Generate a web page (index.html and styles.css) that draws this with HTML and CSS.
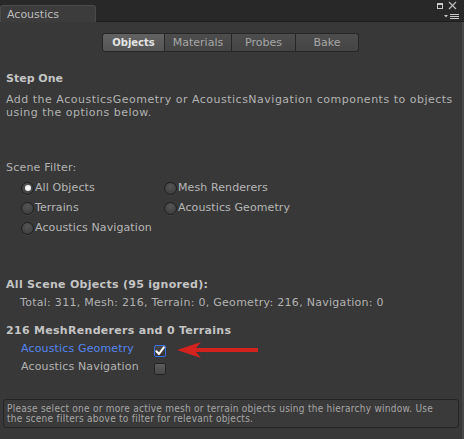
FILE: index.html
```html
<!DOCTYPE html>
<html>
<head>
<meta charset="utf-8">
<link rel="stylesheet" href="styles.css">
</head>
<body>
<div class="window">
  <div class="titlebar">
    <div class="tab">Acoustics</div>
    <svg class="winicons" width="24" height="20" viewBox="0 0 24 20">
      <rect x="1.5" y="2.5" width="5" height="5" fill="none" stroke="#c8c8c8" stroke-width="1"/>
      <rect x="1" y="2" width="6" height="2" fill="#c8c8c8"/>
      <path d="M13 1 L20 8 M20 1 L13 8" stroke="#bdbdbd" stroke-width="1.2" fill="none"/>
      <path d="M8 14 L12 14 L10 16.5 Z" fill="#c8c8c8"/>
      <path d="M14 13.5 H23 M14 15.5 H23 M14 17.5 H23" stroke="#c8c8c8" stroke-width="1.2"/>
    </svg>
  </div>
  <div class="content">
    <div class="toolbar">
      <div class="tb tb-objects sel">Objects</div>
      <div class="tb tb-materials">Materials</div>
      <div class="tb tb-probes">Probes</div>
      <div class="tb tb-bake">Bake</div>
    </div>

    <div class="heading step">Step One</div>
    <p class="para">Add the AcousticsGeometry or AcousticsNavigation components to objects<br>using the options below.</p>

    <div class="label filter">Scene Filter:</div>
    <div class="radios">
      <div class="radio"><span class="dot on"></span>All Objects</div>
      <div class="radio"><span class="dot"></span>Mesh Renderers</div>
      <div class="radio"><span class="dot"></span>Terrains</div>
      <div class="radio"><span class="dot"></span>Acoustics Geometry</div>
      <div class="radio"><span class="dot"></span>Acoustics Navigation</div>
    </div>

    <div class="heading all">All Scene Objects (95 ignored):</div>
    <div class="label totals">Total: 311, Mesh: 216, Terrain: 0, Geometry: 216, Navigation: 0</div>

    <div class="heading mesh">216 MeshRenderers and 0 Terrains</div>
    <div class="checks">
      <div class="check-row">
        <span class="check-label focus">Acoustics Geometry</span>
        <span class="box checked">
          <svg width="10" height="10" viewBox="0 0 10 10"><path d="M1.4 5.2 L4 8 L8.8 1.4" stroke="#ffffff" stroke-width="2" fill="none" stroke-linecap="round" stroke-linejoin="round"/></svg>
        </span>
        <svg class="arrow" width="84" height="20" viewBox="0 0 84 20">
          <path d="M0 10 L24 2 L19 8 L81 8 L81 12 L19 12 L24 18 Z" fill="#d4221f"/>
        </svg>
      </div>
      <div class="check-row">
        <span class="check-label">Acoustics Navigation</span>
        <span class="box"></span>
      </div>
    </div>

    <div class="helpbox">Please select one or more active mesh or terrain objects using the hierarchy window. Use<br>the scene filters above to filter for relevant objects.</div>
  </div>
</div>
</body>
</html>
```

FILE: styles.css
```css
html, body {
  margin: 0;
  padding: 0;
  background: #383838;
}
body {
  width: 464px;
  height: 439px;
  overflow: hidden;
  font-family: "DejaVu Sans", Verdana, sans-serif;
  font-size: 11px;
  color: #b4b4b4;
}
.window {
  width: 464px;
  height: 439px;
  display: flex;
  flex-direction: column;
}
.titlebar {
  height: 21px;
  background: #282828;
  border-bottom: 1px solid #1d1d1d;
  display: flex;
  align-items: flex-start;
}
.tab {
  margin-top: 5px;
  width: 96px;
  height: 17px;
  box-sizing: border-box;
  background: #3c3c3c;
  border: 1px solid #4a4a4a;
  border-bottom: none;
  border-radius: 3px 3px 0 0;
  padding-left: 6px;
  line-height: 17px;
  color: #bcbcbc;
  position: relative;
  z-index: 1;
}
.winicons {
  margin-left: auto;
  margin-right: 4px;
  margin-top: 1px;
}
.content {
  flex: 1;
  box-sizing: border-box;
  padding: 11px 0 0 6px;
  border-right: 2px solid #474747;
  position: relative;
}
.toolbar {
  display: flex;
  margin-left: 96px;
  height: 19px;
}
.tb {
  box-sizing: border-box;
  height: 19px;
  line-height: 18px;
  text-align: center;
  background: linear-gradient(#4d4d4d, #444444);
  border: 1px solid #262626;
  border-left: none;
  color: #a6a6a6;
}
.tb-objects { width: 63px; border-left: 1px solid #262626; border-radius: 3px 0 0 3px; }
.tb-materials { width: 67px; }
.tb-probes { width: 64px; }
.tb-bake { width: 63px; border-radius: 0 3px 3px 0; }
.tb.sel {
  background: linear-gradient(#626262, #555555);
  color: #e4e4e4;
  font-weight: bold;
  font-size: 10px;
}
.heading {
  font-weight: bold;
  color: #c4c4c4;
  line-height: 14px;
  letter-spacing: 0.3px;
}
.step { margin-top: 20px; letter-spacing: 0; }
.para {
  margin: 7px 0 0 0;
  line-height: 13px;
  color: #b2b2b2;
  letter-spacing: 0.5px;
}
.label {
  line-height: 14px;
  color: #b2b2b2;
}
.filter { margin-top: 42px; letter-spacing: 0.2px; }
.radios {
  margin-top: 3px;
  padding-left: 15px;
  display: grid;
  grid-template-columns: 143px auto;
}
.radio {
  height: 20px;
  line-height: 20px;
  display: flex;
  align-items: center;
  color: #b6b6b6;
  letter-spacing: 0.1px;
}
.dot {
  width: 13px;
  height: 13px;
  box-sizing: border-box;
  border-radius: 50%;
  border: 1px solid #1f1f1f;
  background: radial-gradient(circle at 50% 30%, #565656, #3e3e3e 80%);
  box-shadow: 0 1px 0 rgba(255,255,255,0.06);
  margin-right: 1px;
  display: flex;
  align-items: center;
  justify-content: center;
}
.dot.on::after {
  content: "";
  width: 6px;
  height: 6px;
  border-radius: 50%;
  background: #f6f6f6;
}
.all { margin-top: 40px; }
.totals { margin-top: 4px; padding-left: 14px; letter-spacing: 0.28px; }
.mesh { margin-top: 14px; }
.checks { margin-top: 2px; padding-left: 15px; }
.check-row {
  height: 18px;
  line-height: 18px;
  display: flex;
  align-items: center;
  position: relative;
}
.check-label {
  width: 133px;
  color: #b2b2b2;
  letter-spacing: 0.15px;
}
.check-label.focus { color: #5585f0; }
.box {
  width: 12px;
  height: 12px;
  box-sizing: border-box;
  border: 1px solid #252525;
  border-radius: 2px;
  background: linear-gradient(#5c5c5c, #474747);
  display: flex;
  align-items: center;
  justify-content: center;
  margin-top: 4px;
}
.box.checked {
  border: 1px solid #3d6fe6;
  background: linear-gradient(#474747, #333333);
  margin-top: 3px;
}
.arrow {
  position: absolute;
  left: 156px;
  top: 0px;
}
.helpbox {
  margin-top: 23px;
  margin-left: -3px;
  width: 456px;
  box-sizing: border-box;
  border: 1px solid #242424;
  border-radius: 3px;
  background: #3a3a3a;
  padding: 4px 3px 3px 3px;
  font-family: "DejaVu Sans Condensed", "DejaVu Sans", sans-serif;
  font-size: 10px;
  line-height: 10px;
  color: #a6a6a6;
  letter-spacing: 0.26px;
}
```
